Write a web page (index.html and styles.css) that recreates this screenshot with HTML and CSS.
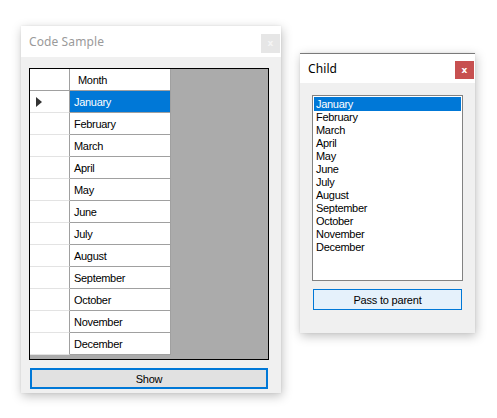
FILE: index.html
```html
<!DOCTYPE html>
<html>
<head>
<meta charset="utf-8">
<link rel="stylesheet" href="styles.css">
</head>
<body>
<div class="desktop">
  <div class="window main-win">
    <div class="titlebar">
      <span class="title inactive">Code Sample</span>
      <span class="close close-inactive">x</span>
    </div>
    <div class="client">
      <div class="grid">
        <div class="rows">
          <div class="row head"><div class="rh"></div><div class="cell hcell">Month</div></div>
          <div class="row"><div class="rh"><span class="arrow"></span></div><div class="cell sel">January</div></div>
          <div class="row"><div class="rh"></div><div class="cell">February</div></div>
          <div class="row"><div class="rh"></div><div class="cell">March</div></div>
          <div class="row"><div class="rh"></div><div class="cell">April</div></div>
          <div class="row"><div class="rh"></div><div class="cell">May</div></div>
          <div class="row"><div class="rh"></div><div class="cell">June</div></div>
          <div class="row"><div class="rh"></div><div class="cell">July</div></div>
          <div class="row"><div class="rh"></div><div class="cell">August</div></div>
          <div class="row"><div class="rh"></div><div class="cell">September</div></div>
          <div class="row"><div class="rh"></div><div class="cell">October</div></div>
          <div class="row"><div class="rh"></div><div class="cell">November</div></div>
          <div class="row"><div class="rh"></div><div class="cell">December</div></div>
        </div>
      </div>
      <button class="btn show-btn">Show</button>
    </div>
  </div>

  <div class="window child-win">
    <div class="titlebar child-title">
      <span class="title">Child</span>
      <span class="close close-active">x</span>
    </div>
    <div class="client child-client">
      <div class="listbox">
        <div class="item selitem">January</div>
        <div class="item">February</div>
        <div class="item">March</div>
        <div class="item">April</div>
        <div class="item">May</div>
        <div class="item">June</div>
        <div class="item">July</div>
        <div class="item">August</div>
        <div class="item">September</div>
        <div class="item">October</div>
        <div class="item">November</div>
        <div class="item">December</div>
      </div>
      <button class="btn pass-btn">Pass to parent</button>
    </div>
  </div>
</div>
</body>
</html>
```

FILE: styles.css
```css
* { box-sizing: border-box; }
html, body { margin: 0; padding: 0; background: #ffffff; }
body { width: 497px; height: 418px; overflow: hidden; font-family: "Liberation Sans", Arial, sans-serif; }
.desktop { position: relative; width: 497px; height: 418px; }

.window {
  position: absolute;
  background: #f0f0f0;
  box-shadow: 1px 3px 10px rgba(0,0,0,0.25), 0 0 2px rgba(0,0,0,0.08);
  display: flex;
  flex-direction: column;
}
.main-win { left: 21px; top: 26px; width: 260px; height: 367px; }
.child-win { left: 300px; top: 53px; width: 175px; height: 280px; border-top: 1px solid #7a7a7a; }

.titlebar {
  position: relative;
  height: 31px;
  background: #ffffff;
  display: flex;
  align-items: center;
  padding-left: 8px;
}
.child-title { height: 29px; }
.title {
  font-family: "Noto Sans", "Open Sans", sans-serif;
  font-size: 12px;
  color: #000;
  letter-spacing: 0.1px;
}
.title.inactive { color: #9a9a9a; }
.close {
  position: absolute;
  right: 1px;
  top: 8px;
  width: 19px;
  height: 19px;
  display: flex;
  align-items: center;
  justify-content: center;
  font-family: "DejaVu Sans", sans-serif;
  font-weight: bold;
  font-size: 9px;
  line-height: 1;
}
.close-inactive { background: #e6e6e6; color: #f5f5f5; }
.close-active { background: #c75050; color: #ffffff; top: 7px; height: 18px; }

.client { flex: 1; display: flex; flex-direction: column; padding: 11px 0 0 8px; }

.grid {
  width: 240px;
  height: 292px;
  border: 1px solid #000;
  background: #ababab;
}
.rows { display: flex; flex-direction: column; width: 141px; }
.row { display: flex; height: 22px; }
.rh {
  width: 40px;
  background: #ffffff;
  border-bottom: 1px solid #e3e3e3;
  border-right: 1px solid #a0a0a0;
  position: relative;
}
.head .rh { border-bottom: 1px solid #a0a0a0; }
.cell {
  width: 101px;
  background: #ffffff;
  border-right: 1px solid #a0a0a0;
  border-bottom: 1px solid #a0a0a0;
  font-size: 11px;
  letter-spacing: -0.3px;
  color: #000;
  padding-left: 4px;
  display: flex;
  align-items: center;
}
.hcell { padding-left: 8px; }
.cell.sel { background: #0078d7; color: #ffffff; }
.arrow {
  position: absolute;
  left: 6px;
  top: 6px;
  width: 0; height: 0;
  border-top: 5px solid transparent;
  border-bottom: 5px solid transparent;
  border-left: 6px solid #333;
}

.btn {
  font-family: "Liberation Sans", Arial, sans-serif;
  font-size: 11px;
  letter-spacing: -0.2px;
  color: #000;
  margin: 0;
  padding: 0;
}
.show-btn {
  margin-top: 8px;
  margin-left: 1px;
  width: 238px;
  height: 21px;
  background: #e1e1e1;
  border: 2px solid #0078d7;
}

.child-client { padding: 12px 0 0 12px; }
.listbox {
  width: 151px;
  height: 186px;
  background: #ffffff;
  border: 1px solid #828282;
  padding: 1px;
}
.item {
  height: 13px;
  line-height: 13px;
  font-size: 11px;
  letter-spacing: -0.3px;
  padding-left: 2px;
  color: #000;
}
.item.selitem { background: #0078d7; color: #fff; height: 14px; line-height: 14px; }
.pass-btn {
  margin-top: 8px;
  margin-left: 1px;
  width: 149px;
  height: 21px;
  background: #e5f1fb;
  border: 1px solid #0078d7;
}
```
